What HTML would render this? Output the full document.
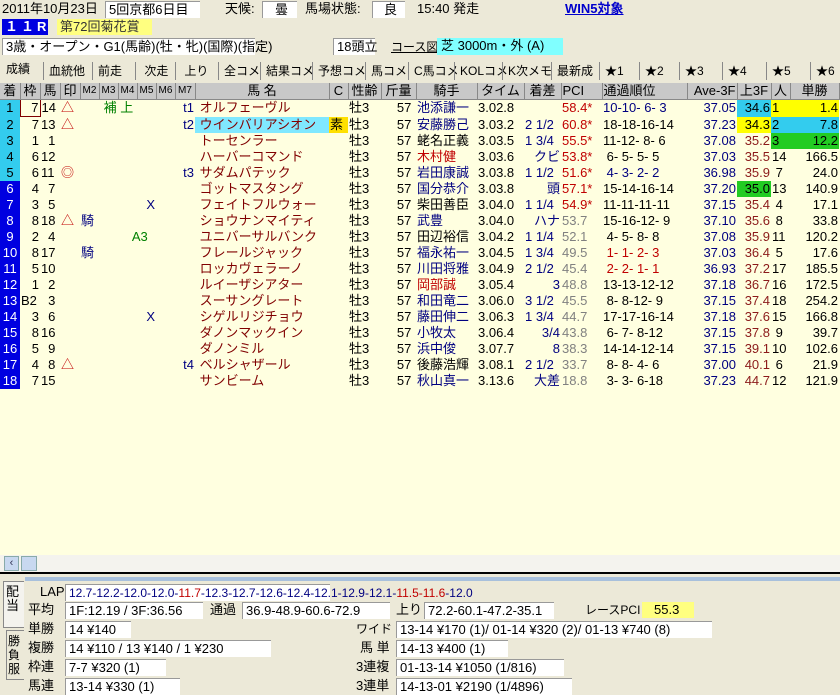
<!DOCTYPE html>
<html><head><meta charset="utf-8">
<style>
*{margin:0;padding:0;box-sizing:border-box}
body{width:840px;height:695px;background:#ECE9D8;font-family:"Liberation Sans","Noto Sans CJK JP",sans-serif;font-size:13px;color:#000;position:relative;overflow:hidden}
.a{position:absolute;white-space:nowrap;line-height:16px}
.box{background:#fff;border-top:1px solid #999;border-left:1px solid #999;padding-left:3px}
table{position:absolute;left:0;top:83px;border-collapse:collapse;table-layout:fixed;font-size:13px}
td{height:16px;line-height:16px;padding:0 1px;white-space:nowrap;overflow:hidden}
thead td{background:#C8C8C8;border-right:1px solid #888;border-bottom:1px solid #888;text-align:center;font-size:13px}
tbody td{background:transparent}
.n{text-align:center;color:#fff;background:#0000E0 !important}
.nc{text-align:center;color:#000;background:#33CCEE !important}
.r{text-align:right}
.hn{color:#800000}
.bl{color:#000080}
.rd{color:#C00000}
.gy{color:#808080}
.dr{color:#8B1A1A}
.gr{color:#008000}
.t{position:absolute;top:62px;height:18px;line-height:18px;font-size:12px;border-left:1px solid #888;padding-left:5px;white-space:nowrap}
</style></head><body>
<div class="a" style="left:2px;top:1px">2011年10月23日</div>
<div class="a box" style="left:105px;top:1px;width:95px">5回京都6日目</div>
<div class="a" style="left:225px;top:1px">天候:</div>
<div class="a box" style="left:262px;top:1px;width:35px;text-align:center">曇</div>
<div class="a" style="left:305px;top:1px">馬場状態:</div>
<div class="a box" style="left:372px;top:1px;width:33px;text-align:center">良</div>
<div class="a" style="left:417px;top:1px">15:40 発走</div>
<div class="a" style="left:565px;top:1px;color:#0000CC;font-weight:bold;text-decoration:underline">WIN5対象</div>
<div class="a" style="left:2px;top:19px;width:46px;background:#0000E0;color:#fff;font-weight:bold;padding-left:3px;letter-spacing:3px">１１R</div>
<div class="a" style="left:57px;top:19px;width:95px;background:#FFFF80;padding-left:3px;color:#333">第72回菊花賞</div>
<div class="a box" style="left:2px;top:38px;width:253px;height:17px">3歳・オープン・G1(馬齢)(牡・牝)(国際)(指定)</div>
<div class="a box" style="left:333px;top:38px;width:42px;height:17px">18頭立</div>
<div class="a" style="left:391px;top:39px;text-decoration:underline;font-size:12px">コース図</div>
<div class="a" style="left:437px;top:38px;width:126px;height:17px;background:#80FFFF;padding-left:4px">芝 3000m・外 (A)</div>
<div class="t" style="left:0;border:none;padding-left:6px;top:60px">成績</div>
<div class="t" style="left:43px">血統他</div>
<div class="t" style="left:92px">前走</div>
<div class="t" style="left:135px">&nbsp;次走</div>
<div class="t" style="left:175px">&nbsp;上り</div>
<div class="t" style="left:218px">全コメ</div>
<div class="t" style="left:260px">結果コメ</div>
<div class="t" style="left:312px">予想コメ</div>
<div class="t" style="left:365px">馬コメ</div>
<div class="t" style="left:408px">C馬コメ</div>
<div class="t" style="left:454px">KOLコメ</div>
<div class="t" style="left:502px">K次メモ</div>
<div class="t" style="left:551px">最新成</div>
<div class="t" style="left:599px">★1</div>
<div class="t" style="left:639px">★2</div>
<div class="t" style="left:679px">★3</div>
<div class="t" style="left:722px">★4</div>
<div class="t" style="left:766px">★5</div>
<div class="t" style="left:810px">★6</div>
<div style="position:absolute;left:0;top:83px;width:840px;height:472px;background:#FFFFE0"></div>
<table>
<colgroup><col style="width:20px"><col style="width:20px"><col style="width:20px"><col style="width:20px"><col style="width:19px"><col style="width:19px"><col style="width:19px"><col style="width:19px"><col style="width:19px"><col style="width:20px"><col style="width:134px"><col style="width:19px"><col style="width:33px"><col style="width:35px"><col style="width:61px"><col style="width:47px"><col style="width:37px"><col style="width:41px"><col style="width:85px"><col style="width:50px"><col style="width:34px"><col style="width:19px"><col style="width:49px"></colgroup>
<thead><tr><td>着</td><td>枠</td><td>馬</td><td>印</td><td style="font-size:10px">M2</td><td style="font-size:10px">M3</td><td style="font-size:10px">M4</td><td style="font-size:10px">M5</td><td style="font-size:10px">M6</td><td style="font-size:10px">M7</td><td>馬 名</td><td>C</td><td>性齢</td><td>斤量</td><td>騎手</td><td>タイム</td><td>着差</td><td style="text-align:left">PCI</td><td style="text-align:left">通過順位</td><td class="r">Ave-3F</td><td>上3F</td><td>人</td><td>単勝</td></tr></thead>
<tbody>
<tr><td class="nc">1</td><td class="r" style="border:1px solid #800000">7</td><td>14</td><td class="rd">△</td><td></td><td colspan="2" class="gr">&nbsp;補 上</td><td></td><td></td><td class="bl r">t1</td><td class="hn">&nbsp;オルフェーヴル</td><td></td><td>牡3</td><td class="r">57&nbsp;</td><td class="bl">池添謙一</td><td>3.02.8</td><td></td><td class="rd">58.4*</td><td class="bl">10-10- 6- 3</td><td class="bl r">37.05</td><td class="r" style="background:#33CCEE">34.6</td><td style="background:#FFFF00">1</td><td class="r" style="background:#FFFF00">1.4</td></tr>
<tr><td class="nc">2</td><td class="r">7</td><td>13</td><td class="rd">△</td><td></td><td></td><td></td><td></td><td></td><td class="bl r">t2</td><td class="hn" style="background:#80E8FF">&nbsp;ウインバリアシオン</td><td style="background:#FFE000">素</td><td>牡3</td><td class="r">57&nbsp;</td><td class="bl">安藤勝己</td><td>3.03.2</td><td class="bl">2 1/2</td><td class="rd">60.8*</td><td>18-18-16-14</td><td class="bl r">37.23</td><td class="r" style="background:#FFFF00">34.3</td><td style="background:#33CCEE">2</td><td class="r" style="background:#33CCEE">7.8</td></tr>
<tr><td class="nc">3</td><td class="r">1</td><td class="r">1&nbsp;</td><td></td><td></td><td></td><td></td><td></td><td></td><td></td><td class="hn">&nbsp;トーセンラー</td><td></td><td>牡3</td><td class="r">57&nbsp;</td><td>蛯名正義</td><td>3.03.5</td><td class="bl">1 3/4</td><td class="rd">55.5*</td><td>11-12- 8- 6</td><td class="bl r">37.08</td><td class="r dr">35.2</td><td style="background:#22CC22">3</td><td class="r" style="background:#22CC22">12.2</td></tr>
<tr><td class="nc">4</td><td class="r">6</td><td>12</td><td></td><td></td><td></td><td></td><td></td><td></td><td></td><td class="hn">&nbsp;ハーバーコマンド</td><td></td><td>牡3</td><td class="r">57&nbsp;</td><td class="rd">木村健</td><td>3.03.6</td><td class="bl r">クビ</td><td class="rd">53.8*</td><td>&nbsp;6- 5- 5- 5</td><td class="bl r">37.03</td><td class="r dr">35.5</td><td>14</td><td class="r">166.5</td></tr>
<tr><td class="nc">5</td><td class="r">6</td><td>11</td><td class="rd">◎</td><td></td><td></td><td></td><td></td><td></td><td class="bl r">t3</td><td class="hn">&nbsp;サダムパテック</td><td></td><td>牡3</td><td class="r">57&nbsp;</td><td class="bl">岩田康誠</td><td>3.03.8</td><td class="bl">1 1/2</td><td class="rd">51.6*</td><td class="bl">&nbsp;4- 3- 2- 2</td><td class="bl r">36.98</td><td class="r dr">35.9</td><td>&nbsp;7</td><td class="r">24.0</td></tr>
<tr><td class="n">6</td><td class="r">4</td><td class="r">7&nbsp;</td><td></td><td></td><td></td><td></td><td></td><td></td><td></td><td class="hn">&nbsp;ゴットマスタング</td><td></td><td>牡3</td><td class="r">57&nbsp;</td><td class="bl">国分恭介</td><td>3.03.8</td><td class="bl r">頭</td><td class="rd">57.1*</td><td>15-14-16-14</td><td class="bl r">37.20</td><td class="r" style="background:#22CC22">35.0</td><td>13</td><td class="r">140.9</td></tr>
<tr><td class="n">7</td><td class="r">3</td><td class="r">5&nbsp;</td><td></td><td></td><td></td><td></td><td class="bl r">X</td><td></td><td></td><td class="hn">&nbsp;フェイトフルウォー</td><td></td><td>牡3</td><td class="r">57&nbsp;</td><td>柴田善臣</td><td>3.04.0</td><td class="bl">1 1/4</td><td class="rd">54.9*</td><td>11-11-11-11</td><td class="bl r">37.15</td><td class="r dr">35.4</td><td>&nbsp;4</td><td class="r">17.1</td></tr>
<tr><td class="n">8</td><td class="r">8</td><td>18</td><td class="rd">△</td><td class="bl">騎</td><td></td><td></td><td></td><td></td><td></td><td class="hn">&nbsp;ショウナンマイティ</td><td></td><td>牡3</td><td class="r">57&nbsp;</td><td class="bl">武豊</td><td>3.04.0</td><td class="bl r">ハナ</td><td class="gy">53.7</td><td>15-16-12- 9</td><td class="bl r">37.10</td><td class="r dr">35.6</td><td>&nbsp;8</td><td class="r">33.8</td></tr>
<tr><td class="n">9</td><td class="r">2</td><td class="r">4&nbsp;</td><td></td><td></td><td></td><td class="gr r" colspan="2">A3&nbsp;&nbsp;</td><td></td><td></td><td class="hn">&nbsp;ユニバーサルバンク</td><td></td><td>牡3</td><td class="r">57&nbsp;</td><td>田辺裕信</td><td>3.04.2</td><td class="bl">1 1/4</td><td class="gy">52.1</td><td>&nbsp;4- 5- 8- 8</td><td class="bl r">37.08</td><td class="r dr">35.9</td><td>11</td><td class="r">120.2</td></tr>
<tr><td class="n">10</td><td class="r">8</td><td>17</td><td></td><td class="bl">騎</td><td></td><td></td><td></td><td></td><td></td><td class="hn">&nbsp;フレールジャック</td><td></td><td>牡3</td><td class="r">57&nbsp;</td><td class="bl">福永祐一</td><td>3.04.5</td><td class="bl">1 3/4</td><td class="gy">49.5</td><td class="rd">&nbsp;1- 1- 2- 3</td><td class="bl r">37.03</td><td class="r dr">36.4</td><td>&nbsp;5</td><td class="r">17.6</td></tr>
<tr><td class="n">11</td><td class="r">5</td><td>10</td><td></td><td></td><td></td><td></td><td></td><td></td><td></td><td class="hn">&nbsp;ロッカヴェラーノ</td><td></td><td>牡3</td><td class="r">57&nbsp;</td><td class="bl">川田将雅</td><td>3.04.9</td><td class="bl">2 1/2</td><td class="gy">45.4</td><td class="rd">&nbsp;2- 2- 1- 1</td><td class="bl r">36.93</td><td class="r dr">37.2</td><td>17</td><td class="r">185.5</td></tr>
<tr><td class="n">12</td><td class="r">1</td><td class="r">2&nbsp;</td><td></td><td></td><td></td><td></td><td></td><td></td><td></td><td class="hn">&nbsp;ルイーザシアター</td><td></td><td>牡3</td><td class="r">57&nbsp;</td><td class="rd">岡部誠</td><td>3.05.4</td><td class="bl r">3</td><td class="gy">48.8</td><td>13-13-12-12</td><td class="bl r">37.18</td><td class="r dr">36.7</td><td>16</td><td class="r">172.5</td></tr>
<tr><td class="n">13</td><td>B2</td><td class="r">3&nbsp;</td><td></td><td></td><td></td><td></td><td></td><td></td><td></td><td class="hn">&nbsp;スーサングレート</td><td></td><td>牡3</td><td class="r">57&nbsp;</td><td class="bl">和田竜二</td><td>3.06.0</td><td class="bl">3 1/2</td><td class="gy">45.5</td><td>&nbsp;8- 8-12- 9</td><td class="bl r">37.15</td><td class="r dr">37.4</td><td>18</td><td class="r">254.2</td></tr>
<tr><td class="n">14</td><td class="r">3</td><td class="r">6&nbsp;</td><td></td><td></td><td></td><td></td><td class="bl r">X</td><td></td><td></td><td class="hn">&nbsp;シゲルリジチョウ</td><td></td><td>牡3</td><td class="r">57&nbsp;</td><td class="bl">藤田伸二</td><td>3.06.3</td><td class="bl">1 3/4</td><td class="gy">44.7</td><td>17-17-16-14</td><td class="bl r">37.18</td><td class="r dr">37.6</td><td>15</td><td class="r">166.8</td></tr>
<tr><td class="n">15</td><td class="r">8</td><td>16</td><td></td><td></td><td></td><td></td><td></td><td></td><td></td><td class="hn">&nbsp;ダノンマックイン</td><td></td><td>牡3</td><td class="r">57&nbsp;</td><td class="bl">小牧太</td><td>3.06.4</td><td class="bl r">3/4</td><td class="gy">43.8</td><td>&nbsp;6- 7- 8-12</td><td class="bl r">37.15</td><td class="r dr">37.8</td><td>&nbsp;9</td><td class="r">39.7</td></tr>
<tr><td class="n">16</td><td class="r">5</td><td class="r">9&nbsp;</td><td></td><td></td><td></td><td></td><td></td><td></td><td></td><td class="hn">&nbsp;ダノンミル</td><td></td><td>牡3</td><td class="r">57&nbsp;</td><td class="bl">浜中俊</td><td>3.07.7</td><td class="bl r">8</td><td class="gy">38.3</td><td>14-14-12-14</td><td class="bl r">37.15</td><td class="r dr">39.1</td><td>10</td><td class="r">102.6</td></tr>
<tr><td class="n">17</td><td class="r">4</td><td class="r">8&nbsp;</td><td class="rd">△</td><td></td><td></td><td></td><td></td><td></td><td class="bl r">t4</td><td class="hn">&nbsp;ベルシャザール</td><td></td><td>牡3</td><td class="r">57&nbsp;</td><td>後藤浩輝</td><td>3.08.1</td><td class="bl">2 1/2</td><td class="gy">33.7</td><td>&nbsp;8- 8- 4- 6</td><td class="bl r">37.00</td><td class="r dr">40.1</td><td>&nbsp;6</td><td class="r">21.9</td></tr>
<tr><td class="n">18</td><td class="r">7</td><td>15</td><td></td><td></td><td></td><td></td><td></td><td></td><td></td><td class="hn">&nbsp;サンビーム</td><td></td><td>牡3</td><td class="r">57&nbsp;</td><td class="bl">秋山真一</td><td>3.13.6</td><td class="bl r">大差</td><td class="gy">18.8</td><td>&nbsp;3- 3- 6-18</td><td class="bl r">37.23</td><td class="r dr">44.7</td><td>12</td><td class="r">121.9</td></tr>
</tbody></table>
<div style="position:absolute;left:0;top:555px;width:840px;height:17px;background:#F4F3EE"></div>
<div style="position:absolute;left:4px;top:556px;width:15px;height:15px;background:#C8D8F0;border:1px solid #8AA;color:#335;font-size:11px;line-height:13px;text-align:center">‹</div>
<div style="position:absolute;left:21px;top:556px;width:16px;height:15px;background:#C8D8F0;border:1px solid #8AA"></div>
<div style="position:absolute;left:0;top:572px;width:840px;height:2px;background:#000"></div>
<div style="position:absolute;left:25px;top:577px;width:815px;height:4px;background:#A8C0DC"></div>
<div style="position:absolute;left:3px;top:581px;width:21px;height:47px;border:1px solid #888;border-right:none;background:#F4F3EE"></div>
<div class="a" style="left:6px;top:585px;width:16px;line-height:14px;font-size:13px;white-space:normal">配当</div>
<div style="position:absolute;left:6px;top:630px;width:18px;height:50px;border:1px solid #888;border-right:none"></div>
<div class="a" style="left:8px;top:634px;width:14px;line-height:14px;font-size:12px;white-space:normal">勝負服</div>
<div class="a" style="left:40px;top:584px">LAP</div>
<div class="a box" style="left:65px;top:584px;width:265px;color:#000080;font-size:12px">12.7-12.2-12.0-12.0-<span style="color:#C00000">11.7</span>-12.3-12.7-12.6-12.4-12.1-12.9-12.1-<span style="color:#C00000">11.5-11.6</span>-12.0</div>
<div class="a" style="left:28px;top:602px">平均</div>
<div class="a box" style="left:65px;top:602px;width:138px">1F:12.19 / 3F:36.56</div>
<div class="a" style="left:210px;top:602px">通過</div>
<div class="a box" style="left:242px;top:602px;width:148px">36.9-48.9-60.6-72.9</div>
<div class="a" style="left:396px;top:602px">上り</div>
<div class="a box" style="left:424px;top:602px;width:130px">72.2-60.1-47.2-35.1</div>
<div class="a" style="left:585px;top:602px;font-size:12px">レースPCI</div>
<div class="a" style="left:642px;top:602px;width:52px;background:#FFFF80;padding-left:12px">55.3</div>
<div class="a" style="left:28px;top:621px">単勝</div>
<div class="a box" style="left:65px;top:621px;width:66px">14 ¥140</div>
<div class="a" style="left:28px;top:640px">複勝</div>
<div class="a box" style="left:65px;top:640px;width:206px">14 ¥110 / 13 ¥140 / 1 ¥230</div>
<div class="a" style="left:28px;top:659px">枠連</div>
<div class="a box" style="left:65px;top:659px;width:101px">7-7 ¥320 (1)</div>
<div class="a" style="left:28px;top:678px">馬連</div>
<div class="a box" style="left:65px;top:678px;width:115px">13-14 ¥330 (1)</div>
<div class="a" style="left:356px;top:621px;font-size:12px">ワイド</div>
<div class="a box" style="left:396px;top:621px;width:316px">13-14 ¥170 (1)/ 01-14 ¥320 (2)/ 01-13 ¥740 (8)</div>
<div class="a" style="left:360px;top:640px">馬 単</div>
<div class="a box" style="left:396px;top:640px;width:112px">14-13 ¥400 (1)</div>
<div class="a" style="left:356px;top:659px">3連複</div>
<div class="a box" style="left:396px;top:659px;width:168px">01-13-14 ¥1050 (1/816)</div>
<div class="a" style="left:356px;top:678px">3連単</div>
<div class="a box" style="left:396px;top:678px;width:176px">14-13-01 ¥2190 (1/4896)</div>
</body></html>
